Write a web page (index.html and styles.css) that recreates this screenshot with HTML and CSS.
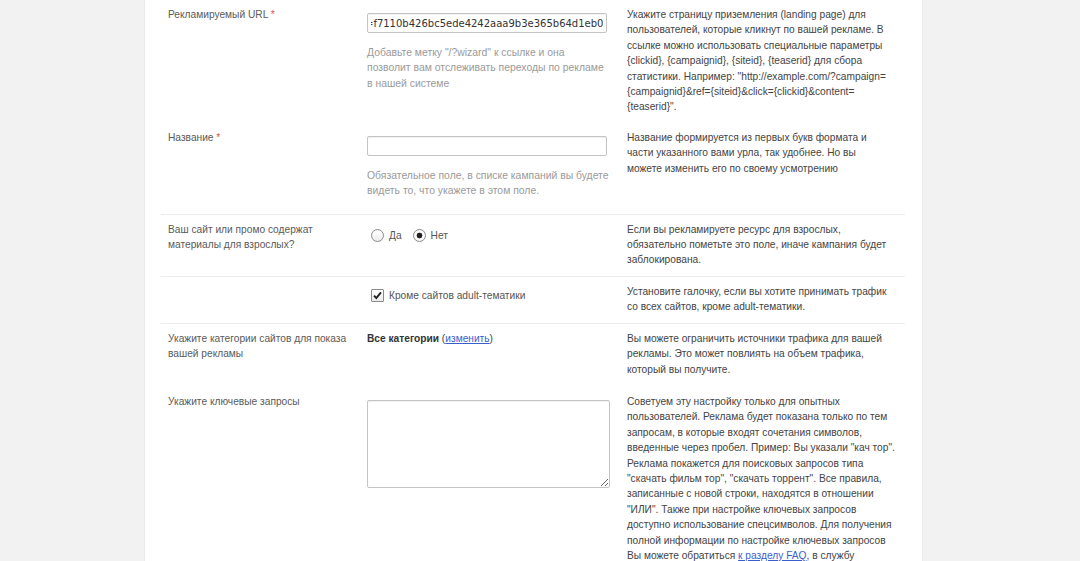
FILE: index.html
```html
<!DOCTYPE html>
<html lang="ru">
<head>
<meta charset="utf-8">
<title>Кампания</title>
<link rel="stylesheet" href="styles.css">
</head>
<body>
<div class="page">
  <div class="panel">
    <div class="row row-first">
      <div class="label">Рекламируемый URL <span class="req">*</span></div>
      <div class="field">
        <input class="text-input url-input" type="text" value="=f7110b426bc5ede4242aaa9b3e365b64d1eb0c">
        <div class="hint">Добавьте метку "/?wizard" к ссылке и она<br>позволит вам отслеживать переходы по рекламе<br>в нашей системе</div>
      </div>
      <div class="help">Укажите страницу приземления (landing page) для<br>пользователей, которые кликнут по вашей рекламе. В<br>ссылке можно использовать специальные параметры<br>{clickid}, {campaignid}, {siteid}, {teaserid} для сбора<br>статистики. Например: "http://example.com/?campaign=<br>{campaignid}&amp;ref={siteid}&amp;click={clickid}&amp;content=<br>{teaserid}".</div>
    </div>

    <div class="row row-sep">
      <div class="label">Название <span class="req">*</span></div>
      <div class="field">
        <input class="text-input" type="text" value="">
        <div class="hint hint-last">Обязательное поле, в списке кампаний вы будете<br>видеть то, что укажете в этом поле.</div>
      </div>
      <div class="help">Название формируется из первых букв формата и<br>части указанного вами урла, так удобнее. Но вы<br>можете изменить его по своему усмотрению</div>
    </div>

    <div class="row row-sep">
      <div class="label">Ваш сайт или промо содержат<br>материалы для взрослых?</div>
      <div class="field">
        <div class="choices">
          <label class="choice"><input class="radio" type="radio" name="adult"> Да</label>
          <label class="choice"><input class="radio" type="radio" name="adult" checked> Нет</label>
        </div>
      </div>
      <div class="help">Если вы рекламируете ресурс для взрослых,<br>обязательно пометьте это поле, иначе кампания будет<br>заблокирована.</div>
    </div>

    <div class="row row-sep">
      <div class="label"></div>
      <div class="field">
        <label class="choice choice-check"><input class="check" type="checkbox" checked> Кроме сайтов adult-тематики</label>
      </div>
      <div class="help">Установите галочку, если вы хотите принимать трафик<br>со всех сайтов, кроме adult-тематики.</div>
    </div>

    <div class="row">
      <div class="label">Укажите категории сайтов для показа<br>вашей рекламы</div>
      <div class="field field-plain"><b class="strong">Все категории</b> (<a href="#" class="link">изменить</a>)</div>
      <div class="help">Вы можете ограничить источники трафика для вашей<br>рекламы. Это может повлиять на объем трафика,<br>который вы получите.</div>
    </div>

    <div class="row row-last">
      <div class="label">Укажите ключевые запросы</div>
      <div class="field">
        <textarea class="area"></textarea>
      </div>
      <div class="help">Советуем эту настройку только для опытных<br>пользователей. Реклама будет показана только по тем<br>запросам, в которые входят сочетания символов,<br>введенные через пробел. Пример: Вы указали "кач тор".<br>Реклама покажется для поисковых запросов типа<br>"скачать фильм тор", "скачать торрент". Все правила,<br>записанные с новой строки, находятся в отношении<br>"ИЛИ". Также при настройке ключевых запросов<br>доступно использование спецсимволов. Для получения<br>полной информации по настройке ключевых запросов<br>Вы можете обратиться <a href="#" class="link">к разделу FAQ</a>, в службу</div>
    </div>
  </div>
</div>
</body>
</html>
```

FILE: styles.css
```css
html, body {
  margin: 0;
  padding: 0;
  background: #f2f2f2;
  height: 100%;
  overflow: hidden;
}

body {
  font-family: "Liberation Sans", Arial, sans-serif;
  font-size: 10.2px;
  line-height: 15.4px;
  color: #444;
}

.page {
  display: flex;
  min-height: 100%;
  padding-left: 144px;
}

.panel {
  width: 779px;
  background: #fff;
  box-sizing: border-box;
  padding: 0 17px 0 16px;
  border-left: 1px solid #e9e9e9;
  border-right: 1px solid #ececec;
  min-height: 561px;
}

.row {
  display: grid;
  grid-template-columns: 186px 240px 279px;
  column-gap: 20px;
  padding: 7px 0 8px;
}

.row-sep {
  border-bottom: 1px solid #ececec;
}

.row-last {
  padding-top: 9px;
}

.label {
  padding-left: 7px;
  color: #5a5a5a;
  white-space: nowrap;
}

.req {
  color: #e0504a;
}

.field {
  padding-top: 6px;
}

.field-plain {
  padding-top: 0;
  color: #444;
}

.text-input {
  display: block;
  box-sizing: border-box;
  width: 240px;
  height: 20px;
  margin: 0;
  padding: 1px 3px 0;
  border: 1px solid #c4c4c4;
  border-radius: 2px;
  box-shadow: inset 0 1px 1px rgba(0, 0, 0, 0.06);
  background: #fff;
  font-family: "DejaVu Sans", Verdana, sans-serif;
  font-size: 10px;
  color: #333;
  outline: none;
}

.url-input {
  text-indent: -6px;
}

.hint {
  margin-top: 12px;
  color: #9a9a9a;
  font-size: 10.4px;
  white-space: nowrap;
}

.hint-last {
  margin-bottom: 7px;
}

.choices {
  display: flex;
  gap: 7px;
}

.choice {
  display: flex;
  align-items: center;
  gap: 5px;
  color: #555;
}

.choice-check {
  margin-top: -2px;
}

.radio {
  appearance: none;
  -webkit-appearance: none;
  width: 13px;
  height: 13px;
  margin: 0 0 0 4px;
  border: 1px solid #8a8a8a;
  border-radius: 50%;
  background: linear-gradient(#ffffff, #ececec);
  box-sizing: border-box;
}

.radio:checked {
  background: radial-gradient(circle, #222 0, #222 2.6px, #fff 3.2px, #eee 100%);
}

.check {
  appearance: none;
  -webkit-appearance: none;
  width: 13px;
  height: 13px;
  margin: 0 0 0 4px;
  border: 1px solid #8a8a8a;
  border-radius: 1px;
  box-sizing: border-box;
  background: linear-gradient(#ffffff, #ececec);
}

.check:checked {
  background: url("data:image/svg+xml,%3Csvg xmlns='http://www.w3.org/2000/svg' viewBox='0 0 11 11'%3E%3Cpath d='M2 5.6 L4.3 8 L9 2.4' fill='none' stroke='%23222' stroke-width='1.9'/%3E%3C/svg%3E") center / 11px 11px no-repeat, linear-gradient(#ffffff, #ececec);
}

.strong {
  color: #333;
  font-weight: bold;
}

.link {
  color: #3a5fcd;
  text-decoration: underline;
}

.area {
  display: block;
  box-sizing: border-box;
  width: 243px;
  height: 88px;
  margin: 0;
  border: 1px solid #c4c4c4;
  border-radius: 2px;
  box-shadow: inset 0 1px 1px rgba(0, 0, 0, 0.06);
  font-family: "Liberation Sans", Arial, sans-serif;
  font-size: 11px;
  resize: both;
  outline: none;
}

.help {
  color: #444;
  white-space: nowrap;
}
```
